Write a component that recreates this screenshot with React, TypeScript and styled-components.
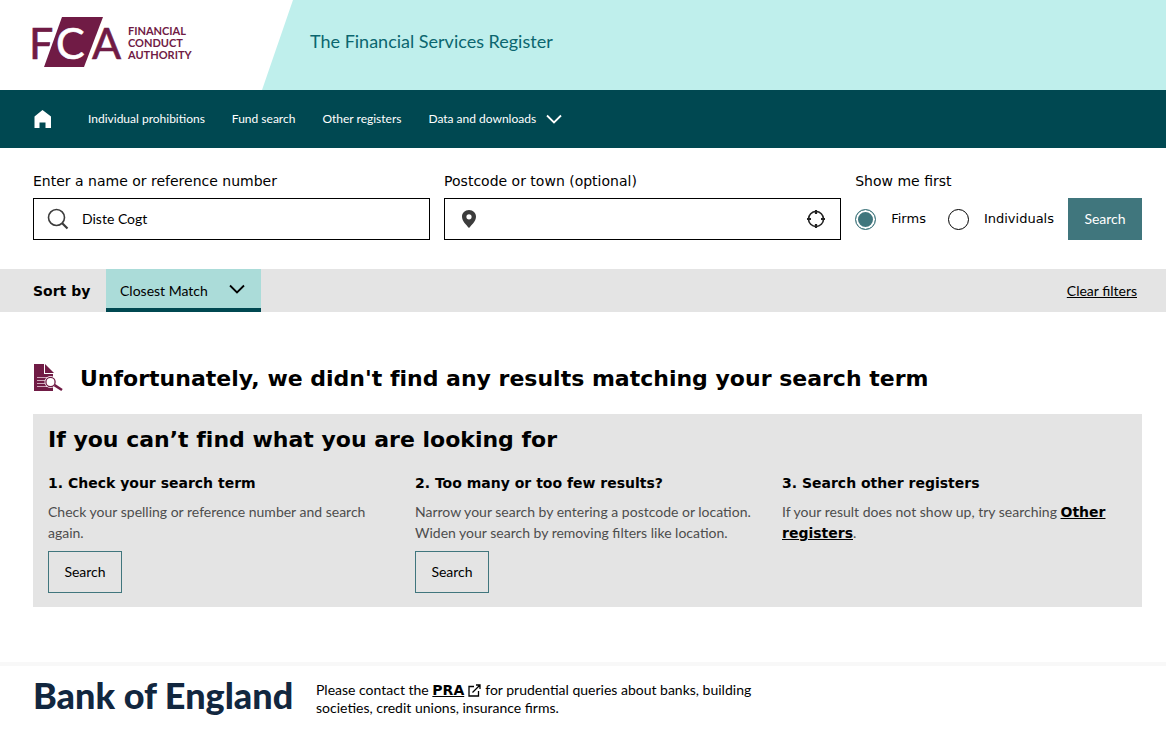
import React from "react";
import styled, { createGlobalStyle, css } from "styled-components";

const lato = `Lato, "Liberation Sans", sans-serif`;
const verdana = `Verdana, "DejaVu Sans", sans-serif`;

const color = {
  plum: "#701b45",
  mint: "#bfefec",
  mintDark: "#abdcd9",
  teal: "#004851",
  tealMid: "#40767d",
  grey: "#e4e4e4",
  text: "#000000",
  muted: "#4d4d4d",
  navy: "#12273f",
};

const GlobalStyle = createGlobalStyle`
  *, *::before, *::after { box-sizing: border-box; }
  body {
    margin: 0;
    background: #ffffff;
    color: ${color.text};
    font: 14px/18px ${lato};
  }
  h1, h2, h3, p, fieldset, legend { margin: 0; padding: 0; border: 0; }
  input, button, select { font: inherit; color: inherit; }
  a { color: inherit; }
  svg { display: block; flex: none; }
`;

const gutters = css`
  padding-left: 33px;
  padding-right: 24px;
`;

const Header = styled.header`
  display: flex;
  height: 90px;
  background: ${color.mint};
`;

const LogoPanel = styled.a`
  flex: none;
  width: 293px;
  padding: 17px 0 0 28px;
  background: #ffffff;
  clip-path: polygon(0 0, 100% 0, calc(100% - 31px) 100%, 0 100%);
`;

const SiteTitle = styled.p`
  padding: 29px 0 0 17px;
  color: #0b666f;
  font-size: 18px;
  line-height: 24px;
`;

const Nav = styled.nav`
  ${gutters}
  display: flex;
  align-items: center;
  gap: 27px;
  height: 58px;
  background: ${color.teal};
  color: #ffffff;
  font-size: 12px;
`;

const NavLink = styled.a`
  text-decoration: none;
`;

const HomeLink = styled(NavLink)`
  margin-right: 9px;
`;

const NavButton = styled.button`
  display: flex;
  align-items: center;
  gap: 10px;
  padding: 0;
  border: 0;
  background: none;
`;

const SearchForm = styled.form`
  ${gutters}
  display: grid;
  grid-template-columns: 1fr 1fr auto auto;
  gap: 14px;
  align-items: end;
  padding-top: 24px;
  padding-bottom: 29px;
`;

const Field = styled.div`
  display: grid;
  gap: 8px;
  min-width: 0;
`;

const labelText = css`
  font-family: ${verdana};
  font-size: 14px;
  line-height: 18px;
`;

const FieldLabel = styled.label`
  ${labelText}
`;

const InputBox = styled.div`
  display: flex;
  align-items: center;
  gap: 13px;
  height: 42px;
  padding: 0 14px 0 13px;
  border: 1px solid #000000;
`;

const TextInput = styled.input`
  flex: 1;
  min-width: 0;
  padding: 0;
  border: 0;
  outline: 0;
  background: none;
`;

const IconButton = styled.button`
  padding: 0;
  border: 0;
  background: none;
`;

const RadioSet = styled.fieldset`
  min-width: 0;
`;

const RadioLegend = styled.legend`
  ${labelText}
  margin-bottom: 8px;
`;

const RadioRow = styled.div`
  display: flex;
  align-items: center;
  gap: 22px;
  height: 42px;
`;

const RadioLabel = styled.label`
  display: flex;
  align-items: center;
  gap: 15px;
  font-family: ${verdana};
  font-size: 13px;
`;

const Radio = styled.input`
  appearance: none;
  width: 21px;
  height: 21px;
  margin: 0;
  border: 1px solid #000000;
  border-radius: 50%;
  &:checked {
    border-color: ${color.tealMid};
    background: ${color.tealMid};
    box-shadow: inset 0 0 0 2px #ffffff;
  }
`;

const Button = styled.button<{ $outlined?: boolean }>`
  width: 74px;
  height: 42px;
  padding: 0;
  border: 1px solid ${color.tealMid};
  background: ${(p) => (p.$outlined ? "transparent" : color.tealMid)};
  color: ${(p) => (p.$outlined ? color.text : "#ffffff")};
`;

const SortBar = styled.div`
  ${gutters}
  display: flex;
  align-items: center;
  height: 43px;
  background: ${color.grey};
`;

const SortLabel = styled.label`
  width: 73px;
  font-family: ${verdana};
  font-weight: 700;
`;

const SelectBox = styled.div`
  display: grid;
  align-items: center;
  width: 155px;
  height: 43px;
  border-bottom: 4px solid ${color.teal};
  background: ${color.mintDark};
  > * { grid-area: 1 / 1; }
  > svg {
    justify-self: end;
    margin-right: 16px;
    pointer-events: none;
  }
`;

const Select = styled.select`
  appearance: none;
  width: 100%;
  height: 39px;
  padding: 4px 14px 0;
  border: 0;
  background: none;
`;

const ClearLink = styled.a`
  margin-left: auto;
  margin-right: 5px;
`;

const Main = styled.main`
  ${gutters}
  padding-top: 50px;
  padding-bottom: 55px;
`;

const NoResults = styled.div`
  display: flex;
  align-items: center;
  gap: 17px;
  margin-bottom: 20px;
`;

const heading = css`
  font-family: ${verdana};
  font-weight: 700;
  font-variant-ligatures: none;
`;

const Title = styled.h1`
  ${heading}
  padding-top: 2px;
  font-size: 22px;
  line-height: 30px;
`;

const Panel = styled.section`
  padding: 11px 15px 14px;
  background: ${color.grey};
`;

const PanelTitle = styled.h2`
  ${heading}
  font-size: 22px;
  line-height: 30px;
`;

const Columns = styled.div`
  display: grid;
  grid-template-columns: repeat(3, minmax(0, 1fr));
  gap: 22px;
  padding-top: 19px;
`;

const Tip = styled.div`
  > ${Button} { margin-top: 8px; }
`;

const TipTitle = styled.h3`
  ${heading}
  margin-bottom: 9px;
  font-size: 14px;
  line-height: 18px;
`;

const TipText = styled.p`
  color: ${color.muted};
  line-height: 21px;
`;

const StrongLink = styled.a`
  color: ${color.text};
  font-family: ${verdana};
  font-weight: 700;
  line-height: 14px;
`;

const Footer = styled.footer`
  ${gutters}
  display: flex;
  align-items: flex-start;
  gap: 21px;
  padding-top: 15px;
  padding-bottom: 16px;
  border-top: 4px solid #f8f8f8;
`;

const BankLogo = styled.a`
  min-width: 262px;
  color: ${color.navy};
  font-size: 36px;
  font-weight: 900;
  line-height: 28px;
  text-decoration: none;
  white-space: nowrap;
`;

const FooterText = styled.p`
  max-width: 470px;
`;

const ExternalIcon = styled.svg`
  display: inline-block;
  margin: 0 4px;
  vertical-align: -2px;
`;

const FcaLogo = () => (
  <svg width="169" height="51" viewBox="-5 0 169 51" role="img" aria-label="Financial Conduct Authority">
    <g fill={color.plum} fontFamily={lato}>
      <g fontSize="43" strokeWidth="0.600">
        <text x="-4" y="42" stroke={color.plum}>F</text>
        <path d="M29 0H70L51 50H11Z" stroke="#ffffff" strokeWidth="4" paintOrder="stroke" />
        <text x="23" y="42" fill="#ffffff" stroke="#ffffff">C</text>
        <text x="59" y="42" stroke={color.plum}>A</text>
      </g>
      <g fontSize="11" fontWeight="700">
        <text x="95" y="18">FINANCIAL</text>
        <text x="95" y="30">CONDUCT</text>
        <text x="95" y="42">AUTHORITY</text>
      </g>
    </g>
  </svg>
);

const HomeIcon = () => (
  <svg width="19" height="20" viewBox="0 0 19 20" fill="#ffffff" aria-hidden="true">
    <path d="M9.500 1 18 7.500V19H12.500V13.500H6.500V19H1.500V7.500Z" />
  </svg>
);

const Chevron = ({ stroke }: { stroke: string }) => (
  <svg width="16" height="10" viewBox="0 0 16 10" fill="none" stroke={stroke} strokeWidth="1.800" aria-hidden="true">
    <path d="M1 1.500 8 8.500 15 1.500" />
  </svg>
);

const SearchIcon = () => (
  <svg width="22" height="22" viewBox="0 0 22 22" fill="none" stroke="#3c3c3c" aria-hidden="true">
    <circle cx="9.500" cy="9.500" r="8" strokeWidth="1.600" />
    <path d="M15 15 20.500 20.500" strokeWidth="2.200" />
  </svg>
);

const PinIcon = () => (
  <svg width="22" height="20" viewBox="-1 0 22 20" fill="#3c3c3c" aria-hidden="true">
    <path fillRule="evenodd" d="M10 1C5.900 1 3 4 3 7.700C3 12 7.500 16 10 19C12.500 16 17 12 17 7.700C17 4 14.100 1 10 1ZM10 5.200A2.600 2.600 0 1 1 10 10.400A2.600 2.600 0 0 1 10 5.200Z" />
  </svg>
);

const TargetIcon = () => (
  <svg width="20" height="20" viewBox="0 0 20 20" fill="none" stroke="#222222" aria-hidden="true">
    <circle cx="10" cy="10" r="7.500" strokeWidth="1.600" />
    <path d="M10 1V5M10 15V19M1 10H5M15 10H19" strokeWidth="2.200" />
  </svg>
);

const DocumentSearchIcon = () => (
  <svg width="30" height="30" viewBox="0 0 30 30" aria-hidden="true">
    <path d="M1 1H11V11H20V28H1Z" fill={color.plum} />
    <path d="M12 1 21 10H12Z" fill={color.plum} />
    <path d="M4 14.500H14M4 17.500H12M4 20.500H12M4 23.500H14" stroke="#d9b9c8" strokeWidth="0.900" />
    <circle cx="17.500" cy="19" r="6" fill="#ffffff" />
    <circle cx="17.500" cy="19" r="4.600" fill="#ffffff" stroke={color.plum} strokeWidth="1.300" />
    <path d="M22 23 29 27.500" stroke="#ffffff" strokeWidth="4.500" />
    <path d="M21.500 22.200 29 27" stroke={color.plum} strokeWidth="2.600" />
  </svg>
);

export default function App() {
  return (
    <>
      <GlobalStyle />
      <Header>
        <LogoPanel href="#"><FcaLogo /></LogoPanel>
        <SiteTitle>The Financial Services Register</SiteTitle>
      </Header>
      <Nav>
        <HomeLink href="#" aria-label="Home"><HomeIcon /></HomeLink>
        <NavLink href="#">Individual prohibitions</NavLink>
        <NavLink href="#">Fund search</NavLink>
        <NavLink href="#">Other registers</NavLink>
        <NavButton type="button">Data and downloads<Chevron stroke="#ffffff" /></NavButton>
      </Nav>
      <SearchForm onSubmit={(e) => e.preventDefault()}>
        <Field>
          <FieldLabel htmlFor="name">Enter a name or reference number</FieldLabel>
          <InputBox>
            <SearchIcon />
            <TextInput id="name" type="text" defaultValue="Diste Cogt" />
          </InputBox>
        </Field>
        <Field>
          <FieldLabel htmlFor="place">Postcode or town (optional)</FieldLabel>
          <InputBox>
            <PinIcon />
            <TextInput id="place" type="text" />
            <IconButton type="button" aria-label="Use my location"><TargetIcon /></IconButton>
          </InputBox>
        </Field>
        <RadioSet>
          <RadioLegend>Show me first</RadioLegend>
          <RadioRow>
            <RadioLabel><Radio type="radio" name="first" defaultChecked />Firms</RadioLabel>
            <RadioLabel><Radio type="radio" name="first" />Individuals</RadioLabel>
          </RadioRow>
        </RadioSet>
        <Button type="submit">Search</Button>
      </SearchForm>
      <SortBar>
        <SortLabel htmlFor="sort">Sort by</SortLabel>
        <SelectBox>
          <Select id="sort"><option>Closest Match</option></Select>
          <Chevron stroke="#000000" />
        </SelectBox>
        <ClearLink href="#">Clear filters</ClearLink>
      </SortBar>
      <Main>
        <NoResults>
          <DocumentSearchIcon />
          <Title>Unfortunately, we didn't find any results matching your search term</Title>
        </NoResults>
        <Panel>
          <PanelTitle>If you can’t find what you are looking for</PanelTitle>
          <Columns>
            <Tip>
              <TipTitle>1. Check your search term</TipTitle>
              <TipText>Check your spelling or reference number and search again.</TipText>
              <Button type="button" $outlined>Search</Button>
            </Tip>
            <Tip>
              <TipTitle>2. Too many or too few results?</TipTitle>
              <TipText>Narrow your search by entering a postcode or location. Widen your search by removing filters like location.</TipText>
              <Button type="button" $outlined>Search</Button>
            </Tip>
            <Tip>
              <TipTitle>3. Search other registers</TipTitle>
              <TipText>If your result does not show up, try searching <StrongLink href="#">Other registers</StrongLink>.</TipText>
            </Tip>
          </Columns>
        </Panel>
      </Main>
      <Footer>
        <BankLogo href="#">Bank of England</BankLogo>
        <FooterText>
          Please contact the <StrongLink href="#">PRA</StrongLink>
          <ExternalIcon width="13" height="13" viewBox="0 0 13 13" fill="none" stroke="#000000" strokeWidth="1.300" aria-hidden="true">
            <path d="M6 2.500H1V12H10.500V7M8 1H12V5M12 1 4.500 8.500" />
          </ExternalIcon>
          for prudential queries about banks, building societies, credit unions, insurance firms.
        </FooterText>
      </Footer>
    </>
  );
}
